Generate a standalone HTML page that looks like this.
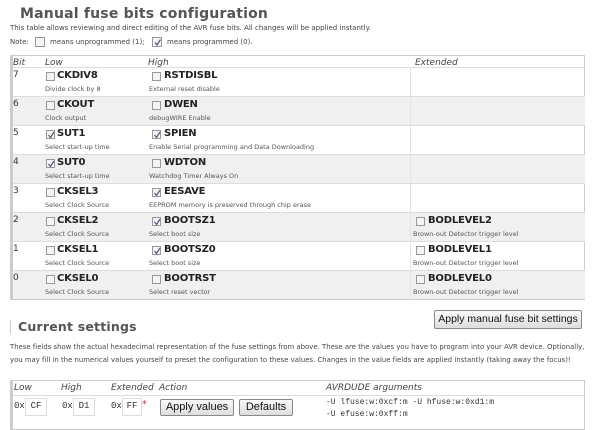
<!DOCTYPE html>
<html><head><style>
body{margin:0;width:600px;height:427px;overflow:hidden;background:#fff;font-family:"DejaVu Sans","Liberation Sans",sans-serif;color:#333;position:relative}
.a{position:absolute;white-space:nowrap}
h1{position:absolute;margin:0;font-size:14px;font-weight:bold;color:#555;letter-spacing:.2px}
.s{font-size:7px;color:#444}
.tbl{position:absolute;left:10px;top:55px;width:575px;height:245px;border:1px solid #ccc;border-left:3px solid #ccc;box-sizing:border-box}
.row{position:absolute;left:0;width:572px;height:29px;border-top:1px solid #ddd;box-sizing:border-box}
.g{background:#f0f0f0}
.hd{font-size:9px;font-style:italic;color:#444}
.cb{position:absolute;width:9px;height:9px;border:1px solid #999;background:#f4f4f4;box-sizing:border-box}
.cb svg{position:absolute;left:0;top:0}
.n{font-size:10px;font-weight:bold;color:#222;letter-spacing:-.2px}
.d{font-size:6.5px;color:#555}
.btn{position:absolute;border:1px solid #888;border-radius:2px;background:linear-gradient(#fafafa,#ddd);font-family:"Liberation Sans",sans-serif;font-size:11px;color:#111;text-align:center;box-sizing:border-box;white-space:nowrap}
.mono{font-family:"Liberation Mono",monospace;font-size:9px}
</style></head><body>
<h1 style="left:20px;top:6px">Manual fuse bits configuration</h1>
<div class="a s" style="left:10px;top:24px">This table allows reviewing and direct editing of the AVR fuse bits. All changes will be applied instantly.</div>
<div class="a s" style="left:10px;top:38px">Note:</div>
<div class="cb" style="left:35px;top:37px;width:10px;height:10px"></div>
<div class="a s" style="left:50px;top:38px">means unprogrammed (1);</div>
<div class="cb" style="left:152px;top:37px;width:10px;height:10px"><svg width="9" height="9"><path d="M2 4.5 L4 7 L7.5 1.5" stroke="#557" stroke-width="1.2" fill="none"/></svg></div>
<div class="a s" style="left:167px;top:38px">means programmed (0).</div>

<div class="tbl">
<div class="a hd" style="left:0px;top:2px">Bit</div>
<div class="a hd" style="left:32px;top:2px">Low</div>
<div class="a hd" style="left:135px;top:2px">High</div>
<div class="a hd" style="left:402px;top:2px">Extended</div>
</div>
<div id="rows"></div>

<script>
var CK='<svg width="8" height="8"><path d="M1.5 4 L3.5 6.5 L7 1" stroke="#557" stroke-width="1.2" fill="none"/></svg>';
var R=[["7","CKDIV8",0,"Divide clock by 8","RSTDISBL",0,"External reset disable"],
["6","CKOUT",0,"Clock output","DWEN",0,"debugWIRE Enable"],
["5","SUT1",1,"Select start-up time","SPIEN",1,"Enable Serial programming and Data Downloading"],
["4","SUT0",1,"Select start-up time","WDTON",0,"Watchdog Timer Always On"],
["3","CKSEL3",0,"Select Clock Source","EESAVE",1,"EEPROM memory is preserved through chip erase"],
["2","CKSEL2",0,"Select Clock Source","BOOTSZ1",1,"Select boot size","BODLEVEL2"],
["1","CKSEL1",0,"Select Clock Source","BOOTSZ0",1,"Select boot size","BODLEVEL1"],
["0","CKSEL0",0,"Select Clock Source","BOOTRST",0,"Select reset vector","BODLEVEL0"]];
var h="";
R.forEach(function(r,i){var t=67+i*29;
h+='<div class="row'+(i%2?' g':'')+'" style="left:13px;top:'+t+'px"></div>';
h+='<div class="a" style="left:13px;top:'+(t+3)+'px;font-size:9px">'+r[0]+'</div>';
h+='<div class="cb" style="left:46px;top:'+(t+5)+'px">'+(r[2]?CK:'')+'</div>';
h+='<div class="a n" style="left:57px;top:'+(t+3)+'px">'+r[1]+'</div>';
h+='<div class="a d" style="left:45px;top:'+(t+18)+'px">'+r[3]+'</div>';
h+='<div class="cb" style="left:152px;top:'+(t+5)+'px">'+(r[5]?CK:'')+'</div>';
h+='<div class="a n" style="left:164px;top:'+(t+3)+'px">'+r[4]+'</div>';
h+='<div class="a d" style="left:149px;top:'+(t+18)+'px">'+r[6]+'</div>';
if(r[7]){h+='<div class="cb" style="left:416px;top:'+(t+5)+'px"></div>';
h+='<div class="a n" style="left:428px;top:'+(t+3)+'px">'+r[7]+'</div>';
h+='<div class="a d" style="left:413px;top:'+(t+18)+'px">Brown-out Detector trigger level</div>';}
});
document.getElementById("rows").innerHTML=h;
</script>
<div style="position:absolute;left:410px;top:67px;width:1px;height:232px;background:#e4e4e4"></div>

<div class="btn" style="left:434px;top:310px;width:148px;height:19px;line-height:17px;font-size:10.5px">Apply manual fuse bit settings</div>

<div style="position:absolute;left:10px;top:320px;width:1px;height:14px;background:#ccc"></div>
<h1 style="left:18px;top:319px;font-size:12.5px">Current settings</h1>
<div class="a s" style="left:10px;top:341px;font-size:6.8px;line-height:12.5px;white-space:normal;width:575px;letter-spacing:.05px">These fields show the actual hexadecimal representation of the fuse settings from above. These are the values you have to program into your AVR device. Optionally, you may fill in the numerical values yourself to preset the configuration to these values. Changes in the value fields are applied instantly (taking away the focus)!</div>

<div style="position:absolute;left:10px;top:380px;width:575px;height:50px;border:1px solid #ccc;border-left:3px solid #ccc;box-sizing:border-box"></div>
<div style="position:absolute;left:13px;top:395px;width:572px;height:1px;background:#ddd"></div>
<div class="a hd" style="left:14px;top:383px">Low</div>
<div class="a hd" style="left:61px;top:383px">High</div>
<div class="a hd" style="left:111px;top:383px">Extended</div>
<div class="a hd" style="left:159px;top:383px">Action</div>
<div class="a hd" style="left:326px;top:383px">AVRDUDE arguments</div>
<div class="a mono" style="left:14px;top:401px">0x</div>
<div class="a mono" style="left:25px;top:398px;width:20px;height:16px;border:1px solid #ddd;background:#fff;line-height:15px;text-align:center">CF</div>
<div class="a mono" style="left:62px;top:401px">0x</div>
<div class="a mono" style="left:73px;top:398px;width:20px;height:16px;border:1px solid #ddd;background:#fff;line-height:15px;text-align:center">D1</div>
<div class="a mono" style="left:111px;top:401px">0x</div>
<div class="a mono" style="left:122px;top:398px;width:18px;height:16px;border:1px solid #ddd;background:#fff;line-height:15px;text-align:center">FF</div>
<div class="a" style="left:142px;top:399px;font-size:10px;color:#c33">*</div>
<div class="btn" style="left:160px;top:399px;width:74px;height:17px;line-height:15px">Apply values</div>
<div class="btn" style="left:239px;top:399px;width:54px;height:17px;line-height:15px">Defaults</div>
<div class="a mono" style="left:326px;top:397px;font-size:8px;line-height:12px">-U lfuse:w:0xcf:m -U hfuse:w:0xd1:m<br>-U efuse:w:0xff:m</div>
</body></html>
